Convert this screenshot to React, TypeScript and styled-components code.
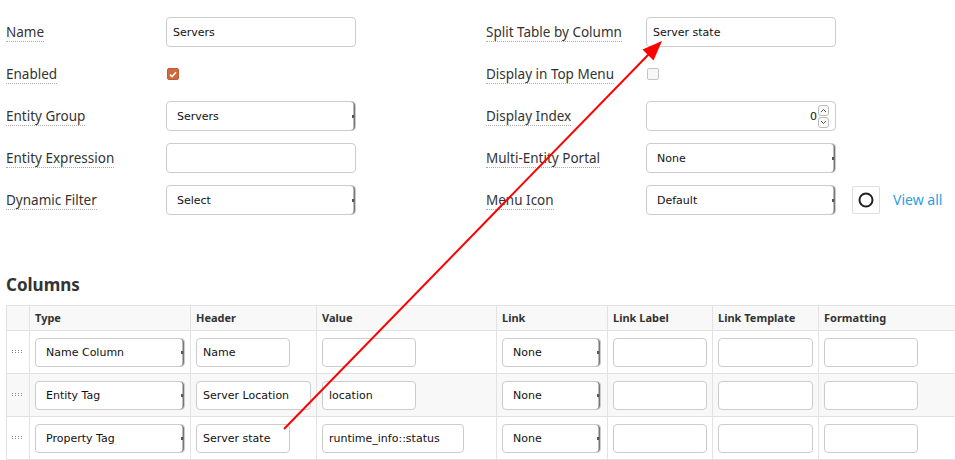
import React from "react";
import styled, { createGlobalStyle } from "styled-components";

const GlobalStyle = createGlobalStyle`
  html, body {
    margin: 0;
    padding: 0;
    background: #fff;
    overflow: hidden;
  }
  body {
    font-family: "Noto Sans", "DejaVu Sans", sans-serif;
    color: #333;
  }
`;

const Page = styled.div`
  position: relative;
  width: 955px;
  height: 460px;
  padding: 17px 0 0 6px;
  box-sizing: border-box;
`;

const FormGrid = styled.div`
  display: grid;
  grid-template-columns: 480px 480px;
`;

const FormColumn = styled.div`
  display: flex;
  flex-direction: column;
  gap: 12px;
`;

const FieldRow = styled.div`
  display: flex;
  align-items: center;
  height: 30px;
`;

const LabelCell = styled.div`
  width: 160px;
  flex-shrink: 0;
  margin-top: -2px;
`;

const Label = styled.span`
  font-size: 13.5px;
  color: #333;
  border-bottom: 1px dotted #aaa;
`;

const ctrlFont = `
  font-family: "DejaVu Sans", Verdana, sans-serif;
  font-size: 11px;
  color: #111;
`;

const TextInput = styled.input<{ $w?: number; $h?: number }>`
  ${ctrlFont}
  display: block;
  box-sizing: border-box;
  width: ${(p) => p.$w ?? 190}px;
  height: ${(p) => p.$h ?? 30}px;
  border: 1px solid #ccc;
  border-radius: 4px;
  padding: 0 6px;
  background: #fff;
  outline: none;
`;

const SelectBox = styled.div<{ $w?: number; $h?: number }>`
  ${ctrlFont}
  position: relative;
  box-sizing: border-box;
  width: ${(p) => p.$w ?? 190}px;
  height: ${(p) => p.$h ?? 30}px;
  border: 1px solid #ccc;
  border-radius: 4px;
  padding-left: 10px;
  display: flex;
  align-items: center;
  background: #fff;
  box-shadow: inset -1.5px 0 0 #777;
  &::after {
    content: "";
    position: absolute;
    right: 1px;
    top: 50%;
    width: 2px;
    height: 3px;
    margin-top: -1px;
    background: #555;
  }
`;

const NumberBox = styled.div`
  ${ctrlFont}
  box-sizing: border-box;
  width: 190px;
  height: 30px;
  border: 1px solid #ccc;
  border-radius: 4px;
  display: flex;
  align-items: center;
  justify-content: flex-end;
  padding-right: 6px;
  gap: 1px;
`;

const Spinner = styled.div`
  display: flex;
  flex-direction: column;
  gap: 1px;
`;

const SpinBtn = styled.div`
  width: 11px;
  height: 11px;
  box-sizing: border-box;
  border: 1px solid #bbb;
  border-radius: 3px;
  display: flex;
  align-items: center;
  justify-content: center;
  background: #fafafa;
`;

const Check = styled.div<{ $on?: boolean }>`
  width: 12px;
  height: 12px;
  box-sizing: border-box;
  margin-left: 1px;
  border-radius: 2px;
  display: flex;
  align-items: center;
  justify-content: center;
  background: ${(p) => (p.$on ? "#d06a3e" : "#f7f7f7")};
  border: 1px solid ${(p) => (p.$on ? "#c05e34" : "#c4c4c4")};
`;

const IconButton = styled.div`
  width: 28px;
  height: 28px;
  box-sizing: border-box;
  margin-left: 16px;
  border: 1px solid #ddd;
  border-radius: 2px;
  display: flex;
  align-items: center;
  justify-content: center;
`;

const ViewAll = styled.a`
  margin-left: 13px;
  margin-top: -2px;
  font-size: 14px;
  color: #2a9ee0;
  text-decoration: none;
`;

const Heading = styled.h3`
  margin: 60px 0 10px;
  font-size: 17px;
  line-height: 20px;
  font-weight: 700;
  color: #333;
`;

const Table = styled.table`
  border-collapse: collapse;
  table-layout: fixed;
  width: 960px;
`;

const HeadCell = styled.th<{ $w: number }>`
  width: ${(p) => p.$w}px;
  height: 25px;
  box-sizing: border-box;
  padding: 0 5px 1px;
  text-align: left;
  font-size: 11px;
  font-weight: 700;
  color: #333;
  background: #f8f8f8;
  border: 1px solid #e2e2e2;
`;

const Row = styled.tr<{ $alt?: boolean }>`
  background: ${(p) => (p.$alt ? "#f8f8f8" : "#fff")};
`;

const Cell = styled.td`
  height: 43px;
  box-sizing: border-box;
  padding: 0 5px;
  border: 1px solid #e2e2e2;
  vertical-align: middle;
`;

const HandleCell = styled(Cell)`
  padding: 0 0 0 5px;
  & svg {
    display: block;
  }
`;

const Arrow = styled.svg`
  position: absolute;
  left: 0;
  top: 0;
  pointer-events: none;
`;

const Handle = () => (
  <svg width="11" height="4" viewBox="0 0 11 4">
    {[0, 3, 6, 9].map((x) =>
      [0, 2].map((y) => (
        <rect key={`${x}-${y}`} x={x} y={y} width="1" height="1" fill="#888" />
      ))
    )}
  </svg>
);

const columns = [
  { key: "h", title: "", w: 23 },
  { key: "type", title: "Type", w: 161 },
  { key: "header", title: "Header", w: 126 },
  { key: "value", title: "Value", w: 180 },
  { key: "link", title: "Link", w: 111 },
  { key: "label", title: "Link Label", w: 105 },
  { key: "tpl", title: "Link Template", w: 106 },
  { key: "fmt", title: "Formatting", w: 148 },
];

const rows = [
  { type: "Name Column", header: "Name", hw: 94, value: "", vw: 94 },
  { type: "Entity Tag", header: "Server Location", hw: 115, value: "location", vw: 94 },
  { type: "Property Tag", header: "Server state", hw: 94, value: "runtime_info::status", vw: 142 },
];

function App() {
  return (
    <Page>
      <GlobalStyle />
      <FormGrid>
        <FormColumn>
          <FieldRow>
            <LabelCell><Label>Name</Label></LabelCell>
            <TextInput readOnly value="Servers" />
          </FieldRow>
          <FieldRow>
            <LabelCell><Label>Enabled</Label></LabelCell>
            <Check $on>
              <svg width="8" height="7" viewBox="0 0 8 7">
                <path d="M1 3.6 L3.1 5.6 L7 1.2" stroke="#fff" strokeWidth="1.6" fill="none" />
              </svg>
            </Check>
          </FieldRow>
          <FieldRow>
            <LabelCell><Label>Entity Group</Label></LabelCell>
            <SelectBox>Servers</SelectBox>
          </FieldRow>
          <FieldRow>
            <LabelCell><Label>Entity Expression</Label></LabelCell>
            <TextInput readOnly value="" />
          </FieldRow>
          <FieldRow>
            <LabelCell><Label>Dynamic Filter</Label></LabelCell>
            <SelectBox>Select</SelectBox>
          </FieldRow>
        </FormColumn>
        <FormColumn>
          <FieldRow>
            <LabelCell><Label>Split Table by Column</Label></LabelCell>
            <TextInput readOnly value="Server state" />
          </FieldRow>
          <FieldRow>
            <LabelCell><Label>Display in Top Menu</Label></LabelCell>
            <Check />
          </FieldRow>
          <FieldRow>
            <LabelCell><Label>Display Index</Label></LabelCell>
            <NumberBox>
              0
              <Spinner>
                <SpinBtn>
                  <svg width="7" height="5" viewBox="0 0 7 5">
                    <path d="M1 4 L3.5 1.5 L6 4" stroke="#555" strokeWidth="1" fill="none" />
                  </svg>
                </SpinBtn>
                <SpinBtn>
                  <svg width="7" height="5" viewBox="0 0 7 5">
                    <path d="M1 1 L3.5 3.5 L6 1" stroke="#555" strokeWidth="1" fill="none" />
                  </svg>
                </SpinBtn>
              </Spinner>
            </NumberBox>
          </FieldRow>
          <FieldRow>
            <LabelCell><Label>Multi-Entity Portal</Label></LabelCell>
            <SelectBox>None</SelectBox>
          </FieldRow>
          <FieldRow>
            <LabelCell><Label>Menu Icon</Label></LabelCell>
            <SelectBox>Default</SelectBox>
            <IconButton>
              <svg width="16" height="16" viewBox="0 0 16 16">
                <circle cx="8" cy="8" r="6.5" stroke="#222" strokeWidth="2" fill="none" />
              </svg>
            </IconButton>
            <ViewAll href="#">View all</ViewAll>
          </FieldRow>
        </FormColumn>
      </FormGrid>

      <Heading>Columns</Heading>
      <Table>
        <thead>
          <tr>
            {columns.map((c) => (
              <HeadCell key={c.key} $w={c.w}>{c.title}</HeadCell>
            ))}
          </tr>
        </thead>
        <tbody>
          {rows.map((r, i) => (
            <Row key={r.type} $alt={i === 1}>
              <HandleCell><Handle /></HandleCell>
              <Cell><SelectBox $w={150} $h={29}>{r.type}</SelectBox></Cell>
              <Cell><TextInput readOnly $w={r.hw} $h={29} value={r.header} /></Cell>
              <Cell><TextInput readOnly $w={r.vw} $h={29} value={r.value} /></Cell>
              <Cell><SelectBox $w={99} $h={29}>None</SelectBox></Cell>
              <Cell><TextInput readOnly $w={94} $h={29} value="" /></Cell>
              <Cell><TextInput readOnly $w={95} $h={29} value="" /></Cell>
              <Cell><TextInput readOnly $w={94} $h={29} value="" /></Cell>
            </Row>
          ))}
        </tbody>
      </Table>

      <Arrow width="955" height="460" viewBox="0 0 955 460">
        <line x1="284" y1="429" x2="649" y2="54" stroke="#ff0000" strokeWidth="2" />
        <polygon points="662,41 642.5,49.5 653.5,60.5" fill="#ff0000" />
      </Arrow>
    </Page>
  );
}

export default App;
